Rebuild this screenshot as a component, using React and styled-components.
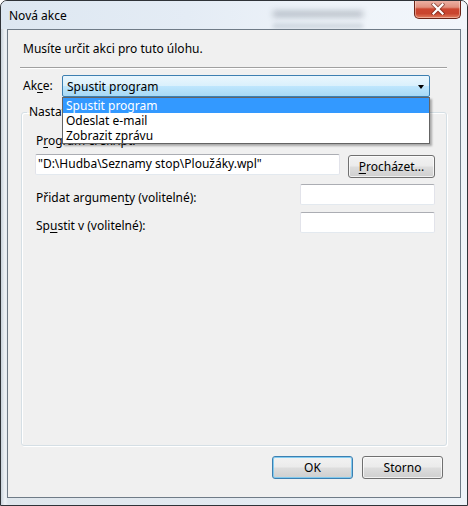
import React from "react";
import styled, { createGlobalStyle } from "styled-components";

const Global = createGlobalStyle`
  html, body { margin: 0; padding: 0; background: #ffffff; }
  body { font-family: "Segoe UI", "Noto Sans", "Liberation Sans", sans-serif; font-size: 12px; color: #000; }
  * { box-sizing: border-box; }
`;

const Window = styled.div`
  width: 468px;
  height: 506px;
  display: flex;
  flex-direction: column;
  border: 1px solid #2f3338;
  border-radius: 7px 7px 0 0;
  background: linear-gradient(90deg, #c9d3dc 0px, #eef2f6 4px, #dfe6ec 7px, #e3eaf1 50%, #eef3f8 100%);
  overflow: hidden;
  position: relative;
`;

const TitleBar = styled.div`
  height: 28px;
  flex: none;
  display: flex;
  align-items: flex-start;
  justify-content: space-between;
  position: relative;
  background: linear-gradient(90deg, #dde7f1 0%, #e4ecf5 40%, #eef3f9 70%, #f2f6fb 100%);
  &::after {
    content: "";
    position: absolute;
    left: 272px;
    top: 10px;
    width: 90px;
    height: 6px;
    background: #6d7885;
    filter: blur(3px);
    opacity: 0.45;
  }
  &::before {
    content: "";
    position: absolute;
    left: 272px;
    top: 23px;
    width: 90px;
    height: 4px;
    background: #9aa6b3;
    filter: blur(2px);
    opacity: 0.45;
  }
`;

const Title = styled.span`
  font-size: 12px;
  color: #000;
  margin: 7px 0 0 8px;
  line-height: 16px;
`;

const CloseButton = styled.div`
  width: 47px;
  height: 19px;
  margin-right: 6px;
  margin-top: -1px;
  border: 1px solid #6b2316;
  border-top: none;
  border-radius: 0 0 5px 5px;
  background: linear-gradient(180deg, #eeb5a9 0%, #e0907e 40%, #cc4630 50%, #c9452e 75%, #e27f60 100%);
  box-shadow: inset 0 0 0 1px rgba(255, 230, 220, 0.45);
  display: flex;
  align-items: center;
  justify-content: center;
  position: relative;
  z-index: 1;
`;

const Client = styled.div`
  flex: 1;
  margin: 0 6px 7px 6px;
  border: 1px solid #6f7b87;
  background: #f0f0f0;
  display: flex;
  flex-direction: column;
  padding: 11px 13px 0 12px;
  position: relative;
`;

const Instruction = styled.div`
  line-height: 16px;
  padding-left: 3px;
`;

const Separator = styled.div`
  height: 1px;
  background: #a0a0a0;
  border-bottom: 1px solid #ffffff;
  box-sizing: content-box;
  margin-top: 10px;
`;

const ActionRow = styled.div`
  display: flex;
  align-items: center;
  margin-top: 6px;
  height: 22px;
`;

const Label = styled.span`
  line-height: 16px;
  white-space: nowrap;
  width: ${(p) => (p.$width ? `${p.$width}px` : "auto")};
  padding-left: ${(p) => p.$indent || 0}px;
  flex: none;
`;

const ComboWrap = styled.div`
  position: relative;
  width: 368px;
  height: 22px;
  z-index: 5;
`;

const Combo = styled.div`
  height: 22px;
  border: 1px solid #3c7fb1;
  border-radius: 2px;
  background: linear-gradient(180deg, #eaf6fd 0%, #d9f0fc 50%, #bee6fd 51%, #a7d9f5 100%);
  display: flex;
  align-items: center;
  justify-content: space-between;
  padding: 0 5px 0 4px;
`;

const Arrow = styled.span`
  width: 0;
  height: 0;
  border-left: 3.5px solid transparent;
  border-right: 3.5px solid transparent;
  border-top: 4px solid #000;
  margin-top: 1px;
`;

const DropList = styled.div`
  position: absolute;
  top: 22px;
  left: 0;
  right: 0;
  background: #ffffff;
  border: 1px solid #646464;
  box-shadow: 2px 2px 2px rgba(0, 0, 0, 0.3);
  padding: 0;
`;

const DropItem = styled.div`
  height: 15px;
  line-height: 15px;
  padding-left: 3px;
  background: ${(p) => (p.$selected ? "#3399ff" : "transparent")};
  color: ${(p) => (p.$selected ? "#ffffff" : "#000")};
`;

const Group = styled.fieldset`
  margin: 8px 0 0 1px;
  padding: 14px 11px 0 13px;
  border: 1px solid #d5dfe5;
  border-radius: 3px;
  box-shadow: inset 1px 1px 0 #ffffff, 1px 1px 0 #ffffff;
  height: 341px;
  min-width: 0;
`;

const Legend = styled.legend`
  padding: 0 2px;
  margin-left: -8px;
  line-height: 14px;
`;

const FieldLabel = styled.div`
  line-height: 16px;
  margin-left: 1px;
  padding-top: ${(p) => p.$top || 0}px;
`;

const PathRow = styled.div`
  display: flex;
  align-items: flex-start;
  margin-top: 5px;
`;

const TextBox = styled.div`
  width: ${(p) => p.$width}px;
  height: ${(p) => p.$height || 21}px;
  background: #ffffff;
  border: 1px solid #e2e3ea;
  border-top-color: #abadb3;
  border-bottom-color: #e3e9ef;
  border-radius: 2px;
  padding-left: 2px;
  line-height: 18px;
  white-space: nowrap;
  overflow: hidden;
  flex: none;
`;

const Button = styled.div`
  width: ${(p) => p.$width}px;
  height: 23px;
  margin: ${(p) => p.$margin || 0};
  border: 1px solid ${(p) => (p.$default ? "#3c7fb1" : "#707070")};
  border-radius: 3px;
  background: linear-gradient(180deg, #f2f2f2 0%, #ebebeb 48%, #dddddd 52%, #cfcfcf 100%);
  box-shadow: inset 0 0 0 1px ${(p) => (p.$default ? "rgba(120, 200, 240, 0.9)" : "rgba(255, 255, 255, 0.7)")};
  display: flex;
  align-items: center;
  justify-content: center;
  line-height: 16px;
  flex: none;
`;

const OptionRow = styled.div`
  display: flex;
  align-items: flex-start;
  justify-content: space-between;
  margin-top: ${(p) => p.$top}px;
`;

const Footer = styled.div`
  display: flex;
  justify-content: flex-end;
  gap: 9px;
  margin-top: 10px;
  padding-right: 4px;
`;

const U = styled.span`
  text-decoration: underline;
  text-underline-offset: 2px;
`;

export default function App() {
  return (
    <>
      <Global />
      <Window>
        <TitleBar>
          <Title>Nová akce</Title>
          <CloseButton>
            <svg width="14" height="12" viewBox="0 0 14 12">
              <path d="M2.5 1.5 L11.5 10.5 M11.5 1.5 L2.5 10.5" stroke="#5a1d12" strokeWidth="4" strokeLinecap="square" opacity="0.55" />
              <path d="M2.5 1.5 L11.5 10.5 M11.5 1.5 L2.5 10.5" stroke="#ffffff" strokeWidth="2.2" strokeLinecap="square" />
            </svg>
          </CloseButton>
        </TitleBar>
        <Client>
          <Instruction>Musíte určit akci pro tuto úlohu.</Instruction>
          <Separator />
          <ActionRow>
            <Label $width={42} $indent={3}>
              Ak<U>c</U>e:
            </Label>
            <ComboWrap>
              <Combo>
                <span>Spustit program</span>
                <Arrow />
              </Combo>
              <DropList>
                <DropItem $selected>Spustit program</DropItem>
                <DropItem>Odeslat e-mail</DropItem>
                <DropItem>Zobrazit zprávu</DropItem>
              </DropList>
            </ComboWrap>
          </ActionRow>
          <Group>
            <Legend>Nastavení</Legend>
            <FieldLabel>
              P<U>r</U>ogram či skript:
            </FieldLabel>
            <PathRow>
              <TextBox $width={305}>"D:\Hudba\Seznamy stop\Ploužáky.wpl"</TextBox>
              <Button $width={87} $margin="1px 0 0 8px">
                <span>
                  <U>P</U>rocházet...
                </span>
              </Button>
            </PathRow>
            <OptionRow $top={6}>
              <FieldLabel $top={6}>
                Přidat argumen<U>t</U>y (volitelné):
              </FieldLabel>
              <TextBox $width={135} />
            </OptionRow>
            <OptionRow $top={6}>
              <FieldLabel $top={6}>
                Sp<U>u</U>stit v (volitelné):
              </FieldLabel>
              <TextBox $width={135} />
            </OptionRow>
          </Group>
          <Footer>
            <Button $width={81} $default>
              OK
            </Button>
            <Button $width={81}>Storno</Button>
          </Footer>
        </Client>
      </Window>
    </>
  );
}
